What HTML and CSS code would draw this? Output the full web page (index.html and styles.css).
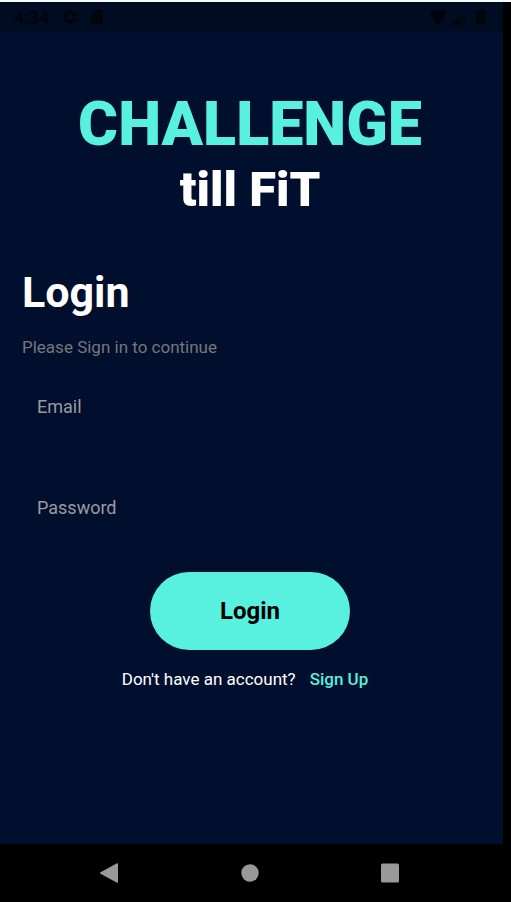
FILE: index.html
```html
<!DOCTYPE html>
<html lang="en">
<head>
<meta charset="utf-8">
<meta name="viewport" content="width=device-width, initial-scale=1">
<title>Challenge till FiT</title>
<link rel="stylesheet" href="styles.css">
</head>
<body>
<div class="screen">
  <header class="status">
    <span class="clock">4:34</span>
    <svg class="status-icon" viewBox="0 0 24 24" aria-hidden="true"><path fill-rule="evenodd" d="M19.4 13a7.500 7.500 0 0 0 0-2l2.600-2-2.500-4.300-3 1.200a7.500 7.500 0 0 0-1.700-1L14.300 2H9.700l-.5 2.900a7.500 7.500 0 0 0-1.700 1l-3-1.200L2 9l2.600 2a7.500 7.500 0 0 0 0 2L2 15l2.500 4.300 3-1.200a7.500 7.500 0 0 0 1.700 1l.5 2.900h4.600l.5-2.900a7.500 7.500 0 0 0 1.700-1l3 1.200L22 15zM12 8.200a3.800 3.800 0 1 1 0 7.600 3.800 3.800 0 0 1 0-7.600z"/></svg>
    <svg class="status-icon sd" viewBox="0 0 24 24" aria-hidden="true"><path fill-rule="evenodd" d="M18 2h-8L4 8v12a2 2 0 0 0 2 2h12a2 2 0 0 0 2-2V4a2 2 0 0 0-2-2zM9.500 5h1.500v3H9.500zm3 0H14v3h-1.500zm3 0H17v3h-1.500z"/></svg>
    <span class="signals">
      <svg class="wifi" viewBox="0 0 18 15" aria-hidden="true"><path d="M0 3Q9-3 18 3L9 15z"/></svg>
      <svg class="cell" viewBox="0 0 15 15" aria-hidden="true"><path opacity=".4" d="M15 0v15H0z"/><path d="M9 6v9H0z"/></svg>
      <svg class="battery" viewBox="0 0 9 16" aria-hidden="true"><path d="M3 0h3v1h2a1 1 0 0 1 1 1v13a1 1 0 0 1-1 1H1a1 1 0 0 1-1-1V2a1 1 0 0 1 1-1h2z"/></svg>
    </span>
  </header>
  <main class="content">
    <div class="brand">
      <p class="brand-name">CHALLENGE</p>
      <p class="brand-tag">till FiT</p>
    </div>
    <h1 class="title">Login</h1>
    <p class="subtitle">Please Sign in to continue</p>
    <form class="form">
      <input class="field" type="email" placeholder="Email" aria-label="Email">
      <input class="field" type="password" placeholder="Password" aria-label="Password">
      <button class="submit" type="button">Login</button>
    </form>
    <p class="signup"><span>Don't have an account?</span><a class="signup-link" href="#">Sign Up</a></p>
  </main>
  <nav class="navbar" aria-label="System">
    <button class="nav-button" type="button" aria-label="Back"><svg viewBox="0 0 20 20"><path d="M.5 9.200 17 .3q1-.4 1 .6v18.200q0 1-1 .6L.5 10.800q-1-.8 0-1.600z"/></svg></button>
    <button class="nav-button" type="button" aria-label="Home"><svg viewBox="0 0 20 20"><circle cx="10" cy="10" r="8.700"/></svg></button>
    <button class="nav-button" type="button" aria-label="Recent apps"><svg viewBox="0 0 20 20"><rect x="1" y=".5" width="18" height="19" rx="1.500"/></svg></button>
  </nav>
</div>
</body>
</html>
```
FILE: styles.css
```css
* { box-sizing: border-box; }

body {
  margin: 0;
  background: #000;
  font-family: Roboto, "Liberation Sans", sans-serif;
}

p, h1 { margin: 0; }

.screen {
  min-height: 100vh;
  display: flex;
  flex-direction: column;
  border-top: 2px solid #f4fbfd;
}

.status {
  display: flex;
  align-items: center;
  height: 30px;
  margin-right: 8px;
  padding: 0 18px 0 14px;
  background: #000c22;
  color: #00040c;
  fill: #00040c;
}

.clock {
  font-size: 18px;
  font-weight: 500;
  margin-right: 12px;
}

.status-icon { width: 18px; height: 18px; }
.sd { margin-left: 9px; }

.signals {
  display: flex;
  align-items: center;
  gap: 4px;
  margin-left: auto;
}

.wifi { width: 18px; height: 15px; }
.cell { width: 15px; height: 15px; }
.battery { width: 9px; height: 16px; margin-left: 6px; }

.content {
  flex: 1;
  margin-right: 8px;
  padding: 56px 25px 0 22px;
  background: #000f2d;
}

.brand {
  text-align: center;
  font-weight: 900;
}

.brand-name {
  color: #58f0de;
  font-size: 61px;
  line-height: 72px;
}

.brand-tag {
  color: #fff;
  font-size: 49px;
  line-height: 60px;
}

.title {
  margin-top: 45px;
  color: #fff;
  font-size: 43px;
  line-height: 54px;
  font-weight: 700;
}

.subtitle {
  margin-top: 16px;
  color: #75777a;
  font-size: 17px;
  line-height: 24px;
}

.form {
  display: flex;
  flex-direction: column;
  margin-top: 17px;
}

.field {
  height: 61px;
  margin-bottom: 40px;
  padding: 0 15px;
  border: 0;
  outline: 0;
  background: transparent;
  color: #fff;
  font: 18px Roboto, "Liberation Sans", sans-serif;
}

.field::placeholder { color: #9a9b9e; opacity: 1; }

.field + .submit { margin-top: -6px; }

.submit {
  align-self: center;
  padding: 24px 70px;
  border: 0;
  border-radius: 39px;
  background: #58f0de;
  color: #000;
  font: 700 24px/30px Roboto, "Liberation Sans", sans-serif;
}

.signup {
  display: flex;
  justify-content: center;
  gap: 14px;
  margin-top: 17px;
  padding-right: 10px;
  color: #fff;
  font-size: 17px;
  line-height: 24px;
}

.signup-link {
  color: #58f0de;
  font-weight: 500;
  text-decoration: none;
}

.navbar {
  display: flex;
  justify-content: center;
  gap: 120px;
  height: 58px;
  margin-right: 11px;
  align-items: center;
}

.nav-button {
  width: 20px;
  height: 20px;
  padding: 0;
  border: 0;
  background: none;
  fill: #999;
}

.nav-button svg { display: block; }
```
